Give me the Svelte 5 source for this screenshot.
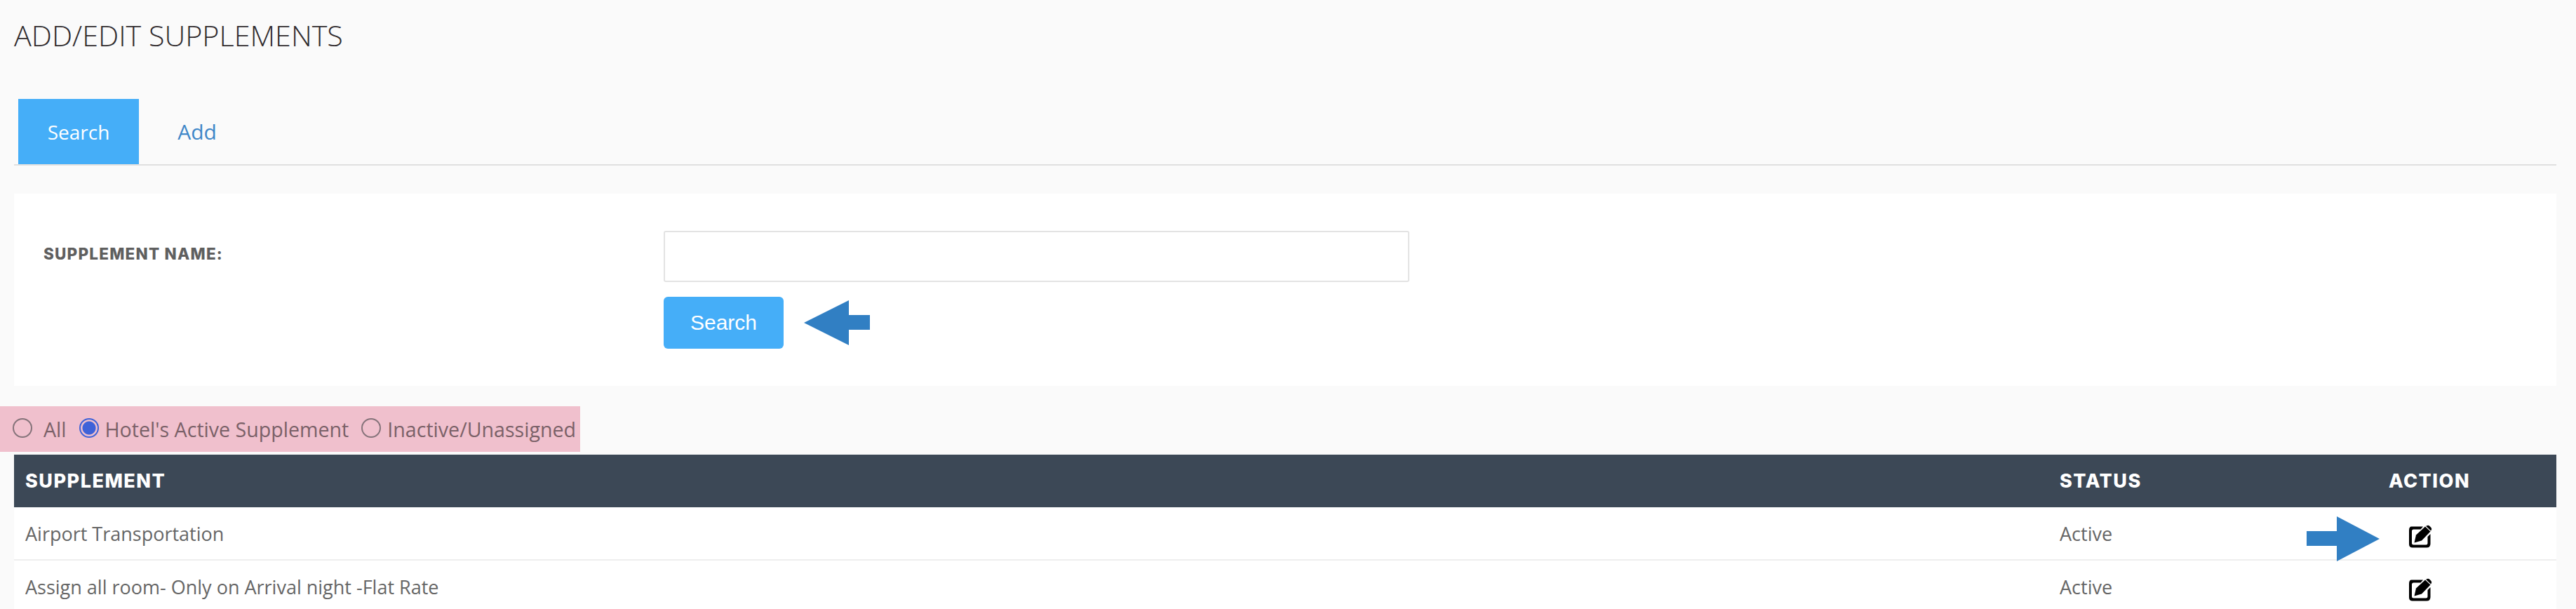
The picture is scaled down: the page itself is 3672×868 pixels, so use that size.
<script>
  const rows = [
    { name: 'Airport Transportation', status: 'Active', pointer: true },
    { name: 'Assign all room- Only on Arrival night -Flat Rate', status: 'Active', pointer: false }
  ];
</script>

<main class="page">
  <h1>ADD/EDIT SUPPLEMENTS</h1>

  <nav class="tabs">
    <span class="tab active">Search</span>
    <span class="tab">Add</span>
  </nav>

  <section class="card">
    <div class="label">SUPPLEMENT NAME:</div>
    <div class="form">
      <input type="text" />
      <div class="action-row">
        <button type="button">Search</button>
        <svg class="arrow" width="94" height="64" viewBox="0 0 94 64"><path d="M0 32 64 0V21H94V42H64V64Z" /></svg>
      </div>
    </div>
  </section>

  <div class="filters">
    <label><input type="radio" name="f" /><span class="all">All</span></label>
    <label><input type="radio" name="f" checked /><span>Hotel's Active Supplement</span></label>
    <label class="last"><input type="radio" name="f" /><span>Inactive/Unassigned</span></label>
  </div>

  <div class="table">
    <div class="row head">
      <div>SUPPLEMENT</div>
      <div>STATUS</div>
      <div class="center">ACTION</div>
    </div>
    {#each rows as r}
      <div class="row body">
        <div>{r.name}</div>
        <div>{r.status}</div>
        <div class="icon-cell">
          {#if r.pointer}
            <svg class="arrow pointer" width="104" height="64" viewBox="0 0 104 64"><path d="M104 32 43 0V21H0V42H43V64Z" /></svg>
          {/if}
          <svg class="edit" width="34" height="33" viewBox="0 0 34 33">
            <path d="M4.500 2.500H21L17.500 6.500H7.500Q5 6.500 5 9V26Q5 28.500 7.500 28.500H25Q27.500 28.500 27.500 26V17L31.500 13V27Q31.500 32.500 26 32.500H6Q1 32.500 1 27.500V8Q1 2.500 4.500 2.500Z" />
            <path d="M11 14.500 24 2.500 31.500 9.500 19 22.500 8.500 25.500Z" />
            <path d="M26 1.500Q28 0 30 1.500L32.500 4Q34 6 32.500 8L32 8.500 25 1.800Z" />
          </svg>
        </div>
      </div>
    {/each}
  </div>
</main>

<style>
  :global(body) {
    margin: 0;
    background: #fafafa;
    font-family: "Open Sans", "Liberation Sans", sans-serif;
    overflow: hidden;
  }
  .page {
    height: 868px;
    padding: 0 28px 0 20px;
    box-sizing: border-box;
    overflow: hidden;
  }
  h1 {
    margin: 0;
    padding-top: 24px;
    height: 116px;
    box-sizing: border-box;
    font-size: 41.3px;
    line-height: 52px;
    font-weight: 300;
    color: #2f2a2d;
    white-space: nowrap;
  }
  .tabs {
    display: flex;
    box-sizing: border-box;
    padding: 25px 0 0 6px;
    border-bottom: 2px solid #e0e0e0;
    height: 120px;
  }
  .tab {
    width: 172px;
    height: 93px;
    display: flex;
    align-items: center;
    justify-content: center;
    font-size: 28px;
    color: #3f87c8;
  }
  .tab.active { background: #45aef8; color: #fff; }
  .tab:not(.active) { width: 166px; font-size: 30px; }
  .card {
    margin-top: 40px;
    height: 274px;
    background: #fff;
    display: flex;
    box-sizing: border-box;
  }
  .label {
    width: 926px;
    padding: 71px 0 0 42px;
    box-sizing: border-box;
    font-size: 22.5px;
    line-height: 30px;
    font-weight: 800;
    letter-spacing: 1.2px;
    color: #5f5f5f;
    font-family: Inter, "Open Sans", sans-serif;
  }
  .form { padding-top: 53px; }
  input[type="text"] {
    display: block;
    width: 1063px;
    height: 73px;
    box-sizing: border-box;
    background: #fff;
    border: 2px solid #e3e3e3;
    border-radius: 3px;
  }
  .action-row {
    display: flex;
    align-items: center;
    gap: 29px;
    margin-top: 21px;
  }
  button {
    width: 171px;
    height: 74px;
    background: #45aef8;
    border: none;
    border-radius: 6px;
    color: #fff;
    font-family: "Liberation Sans", Arial, sans-serif;
    font-size: 30px;
  }
  .arrow path { fill: #317fc3; }
  .filters {
    margin: 29px 0 0 -20px;
    width: 827px;
    height: 65px;
    background: #f0c0cd;
    display: flex;
    align-items: center;
    padding-left: 18px;
    box-sizing: border-box;
    gap: 15px;
    color: #7a6168;
    font-size: 28.6px;
  }
  label { display: flex; align-items: center; white-space: nowrap; }
  label.last { margin-left: 3px; }
  input[type="radio"] {
    appearance: none;
    width: 28px;
    height: 28px;
    margin: 0 9px 0 0;
    background: transparent;
    border: 2px solid #85737a;
    border-radius: 50%;
    box-sizing: border-box;
    position: relative;
    top: -2px;
  }
  input[type="radio"]:checked {
    border-color: #3f62d8;
    background: radial-gradient(circle, #3f62d8 0 9px, transparent 10px);
  }
  .all { margin-left: 7px; margin-right: 3px; }
  .table { margin-top: 4px; }
  .row {
    display: grid;
    grid-template-columns: 2900px 346px 1fr;
    padding-left: 16px;
    align-items: center;
  }
  .center { text-align: center; }
  .head {
    height: 75px;
    background: #3c4856;
    color: #fff;
    font-family: Inter, "Open Sans", sans-serif;
    font-size: 27px;
    font-weight: 800;
    letter-spacing: 1.5px;
  }
  .body {
    height: 76px;
    background: #fff;
    border-bottom: 2px solid #eee;
    box-sizing: border-box;
    color: #666;
    font-size: 27px;
  }
  .icon-cell { position: relative; height: 33px; }
  .edit { display: block; position: relative; left: 151px; top: 4px; }
  .edit path { fill: #000; }
  .pointer { position: absolute; left: 6px; top: -8px; }
</style>
